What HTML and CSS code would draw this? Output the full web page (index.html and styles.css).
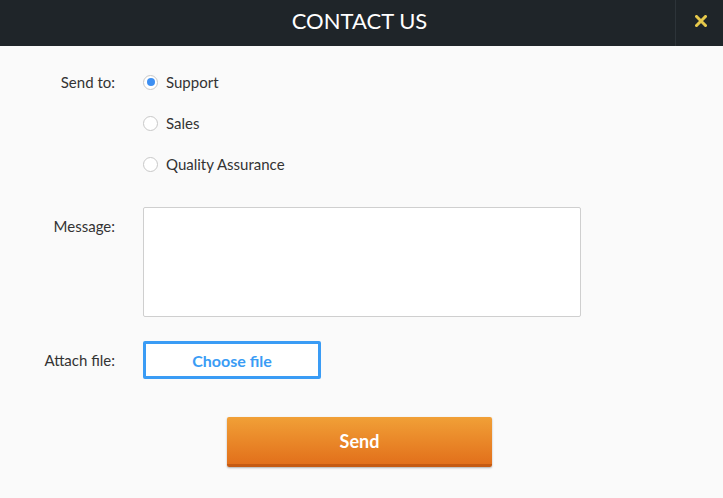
FILE: index.html
```html
<!DOCTYPE html>
<html lang="en">
<head>
    <meta charset="UTF-8">
    <meta name="viewport" content="width=device-width, initial-scale=1.0">
    <title>Contact Us</title>
    <link rel="stylesheet" href="styles.css">
</head>
<body>
    <div class="dialog">
        <div class="dialog-header">
            <span></span>
            <h1>CONTACT US</h1>
            <button class="close-btn" aria-label="Close">
                <svg width="12" height="12" viewBox="0 0 12 12">
                    <path d="M1.5 1.5 L10.5 10.5 M10.5 1.5 L1.5 10.5" stroke="#e6c94b" stroke-width="3" stroke-linecap="square" fill="none"/>
                </svg>
            </button>
        </div>
        <form class="contact-form" onsubmit="return false;">
            <div class="form-row">
                <label class="form-label">Send to:</label>
                <div class="radio-group">
                    <label class="radio-option"><input type="radio" name="dept" checked> Support</label>
                    <label class="radio-option"><input type="radio" name="dept"> Sales</label>
                    <label class="radio-option"><input type="radio" name="dept"> Quality Assurance</label>
                </div>
            </div>
            <div class="form-row message-row">
                <label class="form-label label-top" for="message">Message:</label>
                <textarea id="message"></textarea>
            </div>
            <div class="form-row file-row">
                <label class="form-label">Attach file:</label>
                <button type="button" class="file-btn">Choose file</button>
            </div>
            <div class="send-row">
                <button type="submit" class="send-btn">Send</button>
            </div>
        </form>
    </div>
</body>
</html>
```

FILE: styles.css
```css
body {
    margin: 0;
    font-family: 'Lato', 'Liberation Sans', Arial, sans-serif;
    background-color: #fafafa;
    color: #333;
}
.dialog {
    width: 723px;
    min-height: 498px;
}
.dialog-header {
    display: grid;
    grid-template-columns: 48px 1fr 48px;
    height: 46px;
    background-color: #1f2529;
}
.dialog-header h1 {
    margin: 0;
    padding-right: 4px;
    color: #fff;
    font-size: 22px;
    font-weight: 400;
    text-align: center;
    line-height: 42px;
}
.close-btn {
    display: flex;
    align-items: center;
    justify-content: center;
    padding: 0 0 5px 2px;
    border: none;
    border-left: 1px solid #2d3439;
    background: none;
    cursor: pointer;
}
.contact-form {
    padding-top: 26px;
}
.form-row {
    display: grid;
    grid-template-columns: 115px 438px;
    column-gap: 28px;
    align-items: center;
}
.form-label {
    text-align: right;
    font-size: 15px;
    line-height: 20px;
}
.form-row:first-child .form-label {
    align-self: start;
}
.label-top {
    align-self: start;
    padding-top: 9px;
}
.radio-group {
    display: flex;
    flex-direction: column;
    gap: 21px;
}
.radio-option {
    display: flex;
    align-items: center;
    gap: 8px;
    height: 20px;
    font-size: 15px;
    cursor: pointer;
}
.radio-option input {
    appearance: none;
    -webkit-appearance: none;
    width: 15px;
    height: 15px;
    margin: 0;
    border: 1px solid #c8c8c8;
    border-radius: 50%;
    background-color: #fff;
    display: grid;
    place-items: center;
}
.radio-option input:checked::before {
    content: '';
    width: 8px;
    height: 8px;
    border-radius: 50%;
    background-color: #3d8ff2;
}
.message-row {
    margin-top: 33px;
}
textarea {
    width: 438px;
    height: 110px;
    box-sizing: border-box;
    border: 1px solid #cfcfcf;
    border-radius: 2px;
    background-color: #fff;
    resize: none;
    font-family: inherit;
}
.file-row {
    margin-top: 24px;
}
.file-btn {
    width: 178px;
    height: 38px;
    padding: 1px 0 0;
    border: 3px solid #3a9cf5;
    border-radius: 2px;
    background-color: #fff;
    color: #3a9cf5;
    font-family: inherit;
    font-size: 16px;
    font-weight: 700;
    cursor: pointer;
}
.send-row {
    display: flex;
    justify-content: center;
    padding-right: 4px;
    margin-top: 38px;
}
.send-btn {
    width: 265px;
    height: 50px;
    border: none;
    border-bottom: 3px solid #c55a12;
    border-radius: 2px;
    background: linear-gradient(#f1a037, #e2701b);
    box-shadow: 0 1px 2px rgba(0,0,0,0.3);
    color: #fff;
    font-family: inherit;
    font-size: 18px;
    font-weight: 700;
    cursor: pointer;
}
```
